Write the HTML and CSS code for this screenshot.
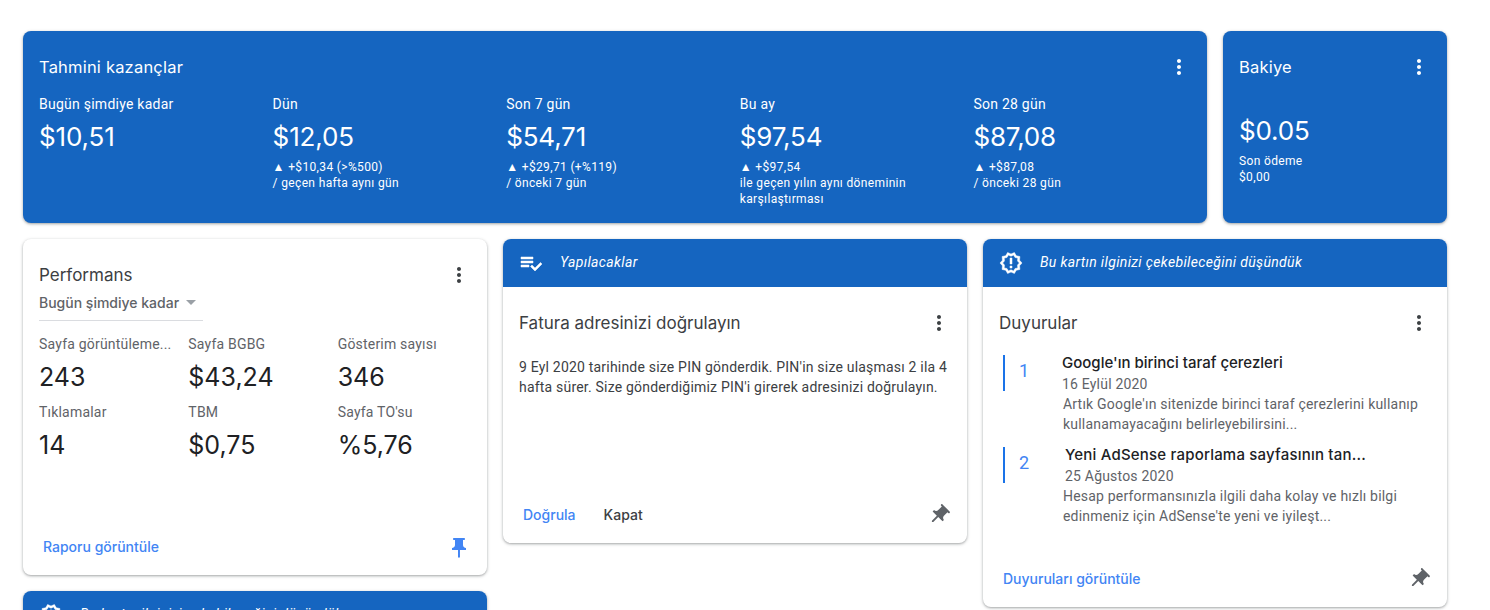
FILE: index.html
```html
<!DOCTYPE html>
<html lang="tr">
<head>
  <meta charset="UTF-8">
  <meta name="viewport" content="width=device-width, initial-scale=1.0">
  <title>AdSense Ana Sayfa</title>
  <link rel="stylesheet" href="styles.css">
</head>
<body>

  <svg class="icon-defs" width="0" height="0">
    <symbol id="i-more" viewBox="0 0 24 24"><path d="M12 8c1.1 0 2-.9 2-2s-.9-2-2-2-2 .9-2 2 .9 2 2 2zm0 2c-1.1 0-2 .9-2 2s.9 2 2 2 2-.9 2-2-.9-2-2-2zm0 6c-1.1 0-2 .9-2 2s.9 2 2 2 2-.9 2-2-.9-2-2-2z"/></symbol>
    <symbol id="i-pin" viewBox="0 0 24 24"><path d="M16 9V4h1c.55 0 1-.45 1-1s-.45-1-1-1H7c-.55 0-1 .45-1 1s.45 1 1 1h1v5c0 1.66-1.34 3-3 3v2h5.97v7l1 1 1-1v-7H19v-2c-1.66 0-3-1.34-3-3z"/></symbol>
    <symbol id="i-todo" viewBox="0 0 24 24"><path d="M14 10H2v2h12v-2zm0-4H2v2h12V6zM2 16h8v-2H2v2zm19.5-4.5L23 13l-6.99 7-4.51-4.5L13 14l3.01 3 5.49-5.5z"/></symbol>
    <symbol id="i-badge" viewBox="0 0 24 24"><path d="M23 12l-2.44-2.78.34-3.68-3.61-.82-1.89-3.18L12 3 8.6 1.54 6.71 4.72l-3.61.81.34 3.68L1 12l2.44 2.78-.34 3.69 3.61.82 1.89 3.18L12 21l3.4 1.46 1.89-3.18 3.61-.82-.34-3.68L23 12zm-4.51 2.11l.26 2.79-2.74.62-1.43 2.41L12 18.82l-2.58 1.11-1.43-2.41-2.74-.62.26-2.8L3.66 12l1.85-2.12-.26-2.78 2.74-.61 1.43-2.41L12 5.18l2.58-1.11 1.43 2.41 2.74.62-.26 2.79L20.34 12l-1.85 2.11zM11 15h2v2h-2zm0-8h2v6h-2z"/></symbol>
  </svg>

  <div class="page">

    <div class="top-row">
      <section class="card card-blue earnings">
        <div class="card-head">
          <h2 class="card-title">Tahmini kazançlar</h2>
          <svg class="icon"><use href="#i-more"/></svg>
        </div>
        <div class="stats">
          <div class="stat">
            <div class="stat-label">Bugün şimdiye kadar</div>
            <div class="stat-value">$10,51</div>
          </div>
          <div class="stat">
            <div class="stat-label">Dün</div>
            <div class="stat-value">$12,05</div>
            <div class="stat-sub">▲ +$10,34 (&gt;%500)<br>/ geçen hafta aynı gün</div>
          </div>
          <div class="stat">
            <div class="stat-label">Son 7 gün</div>
            <div class="stat-value">$54,71</div>
            <div class="stat-sub">▲ +$29,71 (+%119)<br>/ önceki 7 gün</div>
          </div>
          <div class="stat">
            <div class="stat-label">Bu ay</div>
            <div class="stat-value">$97,54</div>
            <div class="stat-sub">▲ +$97,54<br>ile geçen yılın aynı döneminin karşılaştırması</div>
          </div>
          <div class="stat">
            <div class="stat-label">Son 28 gün</div>
            <div class="stat-value">$87,08</div>
            <div class="stat-sub">▲ +$87,08<br>/ önceki 28 gün</div>
          </div>
        </div>
      </section>

      <section class="card card-blue balance">
        <div class="card-head">
          <h2 class="card-title">Bakiye</h2>
          <svg class="icon"><use href="#i-more"/></svg>
        </div>
        <div class="stat-value balance-value">$0.05</div>
        <div class="stat-sub">Son ödeme<br>$0,00</div>
      </section>
    </div>

    <div class="columns">

      <div class="column">
        <section class="card perf">
          <div class="card-head">
            <h2 class="card-title">Performans</h2>
            <svg class="icon icon-dark"><use href="#i-more"/></svg>
          </div>
          <div class="range-select">
            <span>Bugün şimdiye kadar</span>
            <span class="range-arrow"></span>
          </div>
          <div class="metrics">
            <div class="metric">
              <div class="metric-label">Sayfa görüntüleme...</div>
              <div class="metric-value">243</div>
            </div>
            <div class="metric">
              <div class="metric-label">Sayfa BGBG</div>
              <div class="metric-value">$43,24</div>
            </div>
            <div class="metric">
              <div class="metric-label">Gösterim sayısı</div>
              <div class="metric-value">346</div>
            </div>
            <div class="metric">
              <div class="metric-label">Tıklamalar</div>
              <div class="metric-value">14</div>
            </div>
            <div class="metric">
              <div class="metric-label">TBM</div>
              <div class="metric-value">$0,75</div>
            </div>
            <div class="metric">
              <div class="metric-label">Sayfa TO'su</div>
              <div class="metric-value">%5,76</div>
            </div>
          </div>
          <div class="card-foot">
            <a class="link">Raporu görüntüle</a>
            <svg class="icon icon-link foot-pin"><use href="#i-pin"/></svg>
          </div>
        </section>

        <section class="card">
          <div class="banner">
            <svg class="icon"><use href="#i-badge"/></svg>
            <span>Bu kartın ilginizi çekebileceğini düşündük</span>
          </div>
        </section>
      </div>

      <div class="column">
        <section class="card todo">
          <div class="banner">
            <svg class="icon"><use href="#i-todo"/></svg>
            <span>Yapılacaklar</span>
          </div>
          <div class="card-head">
            <h2 class="card-title">Fatura adresinizi doğrulayın</h2>
            <svg class="icon icon-dark"><use href="#i-more"/></svg>
          </div>
          <p class="todo-text">9 Eyl 2020 tarihinde size PIN gönderdik. PIN'in size ulaşması 2 ila 4 hafta sürer. Size gönderdiğimiz PIN'i girerek adresinizi doğrulayın.</p>
          <div class="card-foot">
            <a class="link">Doğrula</a>
            <a class="link link-plain">Kapat</a>
            <svg class="icon icon-grey icon-tilt foot-pin"><use href="#i-pin"/></svg>
          </div>
        </section>
      </div>

      <div class="column">
        <section class="card news">
          <div class="banner">
            <svg class="icon"><use href="#i-badge"/></svg>
            <span>Bu kartın ilginizi çekebileceğini düşündük</span>
          </div>
          <div class="card-head">
            <h2 class="card-title">Duyurular</h2>
            <svg class="icon icon-dark"><use href="#i-more"/></svg>
          </div>
          <div class="news-list">
            <div class="news-item">
              <div class="news-num">1</div>
              <div class="news-text">
                <div class="news-head news-head-first">
                  <div class="news-title">Google'ın birinci taraf çerezleri</div>
                  <div class="news-date">16 Eylül 2020</div>
                </div>
                <div class="news-desc">Artık Google'ın sitenizde birinci taraf çerezlerini kullanıp kullanamayacağını belirleyebilirsini...</div>
              </div>
            </div>
            <div class="news-item">
              <div class="news-num">2</div>
              <div class="news-text">
                <div class="news-head news-head-second">
                  <div class="news-title">Yeni AdSense raporlama sayfasının tan...</div>
                  <div class="news-date">25 Ağustos 2020</div>
                </div>
                <div class="news-desc">Hesap performansınızla ilgili daha kolay ve hızlı bilgi edinmeniz için AdSense'te yeni ve iyileşt...</div>
              </div>
            </div>
          </div>
          <div class="card-foot">
            <a class="link">Duyuruları görüntüle</a>
            <svg class="icon icon-grey icon-tilt foot-pin"><use href="#i-pin"/></svg>
          </div>
        </section>
      </div>

    </div>
  </div>

</body>
</html>
```

FILE: styles.css
```css
html, body {
  height: 610px;
  overflow: hidden;
}

body {
  margin: 0;
  background-color: #fff;
  font-family: Roboto, "Liberation Sans", sans-serif;
  color: #3c4043;
}

.icon-defs {
  position: absolute;
}

.page {
  width: 1424px;
  padding: 31px 0 0 23px;
}

.top-row {
  display: flex;
  gap: 16px;
  margin-bottom: 16px;
}

.columns {
  display: grid;
  grid-template-columns: repeat(3, 464px);
  gap: 16px;
  align-items: start;
}

.column {
  display: flex;
  flex-direction: column;
  gap: 16px;
}

.card {
  display: flex;
  flex-direction: column;
  overflow: hidden;
  background-color: #fff;
  border-radius: 8px;
  box-shadow: 0 1px 2px rgba(60, 64, 67, 0.3), 0 1px 3px 1px rgba(60, 64, 67, 0.15);
}

.card-blue {
  background-color: #1565c0;
  color: #fff;
  height: 192px;
}

.card-head {
  display: flex;
  align-items: center;
  justify-content: space-between;
  height: 40px;
  padding: 16px 16px 0;
  flex-shrink: 0;
}

.card-title {
  margin: 0;
  font-family: Inter, sans-serif;
  font-size: 16.5px;
  font-weight: 400;
  letter-spacing: 0.2px;
}

.icon {
  width: 24px;
  height: 24px;
  flex-shrink: 0;
  fill: #fff;
}

.icon-dark {
  fill: #3c4043;
}

.icon-grey {
  fill: #5f6368;
}

.icon-link {
  fill: #4285f4;
  transform: translateY(1px);
}

.icon-tilt {
  transform: rotate(45deg);
}

/* top cards */
.earnings {
  flex: 1;
}

.balance {
  width: 224px;
}

.stats {
  display: grid;
  grid-template-columns: repeat(5, 1fr);
  margin-top: 7px;
  padding-left: 16px;
}

.stat {
  padding-right: 16px;
}

.stat-label {
  font-size: 14px;
  line-height: 20px;
  letter-spacing: 0.25px;
}

.stat-value {
  margin: 5px 0 4px;
  font-family: Inter, sans-serif;
  font-size: 26px;
  line-height: 36px;
  letter-spacing: -0.15px;
}

.stat-sub {
  font-size: 12px;
  line-height: 16px;
  letter-spacing: 0.35px;
}

.balance-value {
  margin: 26px 0 4px;
  padding-left: 16px;
}

.balance .stat-sub {
  padding-left: 16px;
}

/* performans */
.perf {
  height: 336px;
}

.perf .card-title,
.todo .card-title,
.news .card-title {
  font-size: 17px;
  letter-spacing: 0;
  color: #3c4043;
}

.range-select {
  display: flex;
  justify-content: space-between;
  align-items: center;
  width: 164px;
  height: 15px;
  margin-left: 16px;
  padding-bottom: 10px;
  border-bottom: 1px solid #dadce0;
  font-family: Inter, sans-serif;
  font-size: 14px;
  font-weight: 500;
  color: #5f6368;
}

.range-arrow {
  width: 0;
  height: 0;
  margin-right: 7px;
  border-left: 5px solid transparent;
  border-right: 5px solid transparent;
  border-top: 5px solid #9aa0a6;
}

.metrics {
  display: grid;
  grid-template-columns: repeat(3, 1fr);
  row-gap: 7px;
  margin-top: 13px;
  padding-left: 16px;
}

.metric {
  min-width: 0;
}

.metric-label {
  font-size: 14px;
  line-height: 20px;
  letter-spacing: 0.2px;
  color: #5f6368;
  white-space: nowrap;
}

.metric-value {
  margin-top: 5px;
  font-family: Inter, sans-serif;
  font-size: 25px;
  line-height: 36px;
  color: #202124;
}

.card-foot {
  display: flex;
  align-items: center;
  gap: 28px;
  height: 24px;
  margin-top: auto;
  padding: 0 16px 16px 20px;
}

.foot-pin {
  margin-left: auto;
}

.link {
  margin-bottom: 2px;
  font-family: Inter, sans-serif;
  font-size: 14px;
  font-weight: 500;
  color: #4285f4;
}

.link-plain {
  color: #3c4043;
}

/* blue strip on top of a card */
.banner {
  display: flex;
  align-items: center;
  gap: 17px;
  height: 48px;
  padding-left: 16px;
  background-color: #1565c0;
  color: #fff;
  font-size: 14px;
  font-style: italic;
  letter-spacing: 0.35px;
  flex-shrink: 0;
}

.banner span {
  margin-bottom: 2px;
}

.banner .icon {
  stroke: #fff;
  stroke-width: 0.5px;
}

/* yapilacaklar */
.todo {
  height: 304px;
}

.todo-text {
  margin: 14px 0 0;
  padding: 0 16px;
  font-size: 14px;
  line-height: 20px;
  letter-spacing: 0.2px;
}

/* duyurular */
.news {
  height: 368px;
}

.news-list {
  display: flex;
  flex-direction: column;
  gap: 11px;
  margin-top: 10px;
  padding: 0 16px 0 20px;
}

.news-item {
  display: flex;
}

.news-num {
  width: 60px;
  height: 36px;
  margin-top: 2px;
  padding-left: 14px;
  box-sizing: border-box;
  border-left: 2px solid #1a73e8;
  font-size: 18px;
  line-height: 32px;
  color: #4285f4;
  flex-shrink: 0;
}

.news-head-first {
  margin-left: -1px;
}

.news-head-second {
  margin-left: 2px;
}

.news-head-second .news-title {
  letter-spacing: 0.2px;
}

.news-title {
  font-family: Inter, sans-serif;
  font-size: 15px;
  line-height: 20px;
  font-weight: 500;
  color: #202124;
}

.news-date {
  margin-top: 1px;
  font-size: 14px;
  line-height: 20px;
  letter-spacing: 0.2px;
  color: #5f6368;
}

.news-desc {
  font-size: 14px;
  line-height: 20px;
  letter-spacing: 0.2px;
  color: #5f6368;
}
```
